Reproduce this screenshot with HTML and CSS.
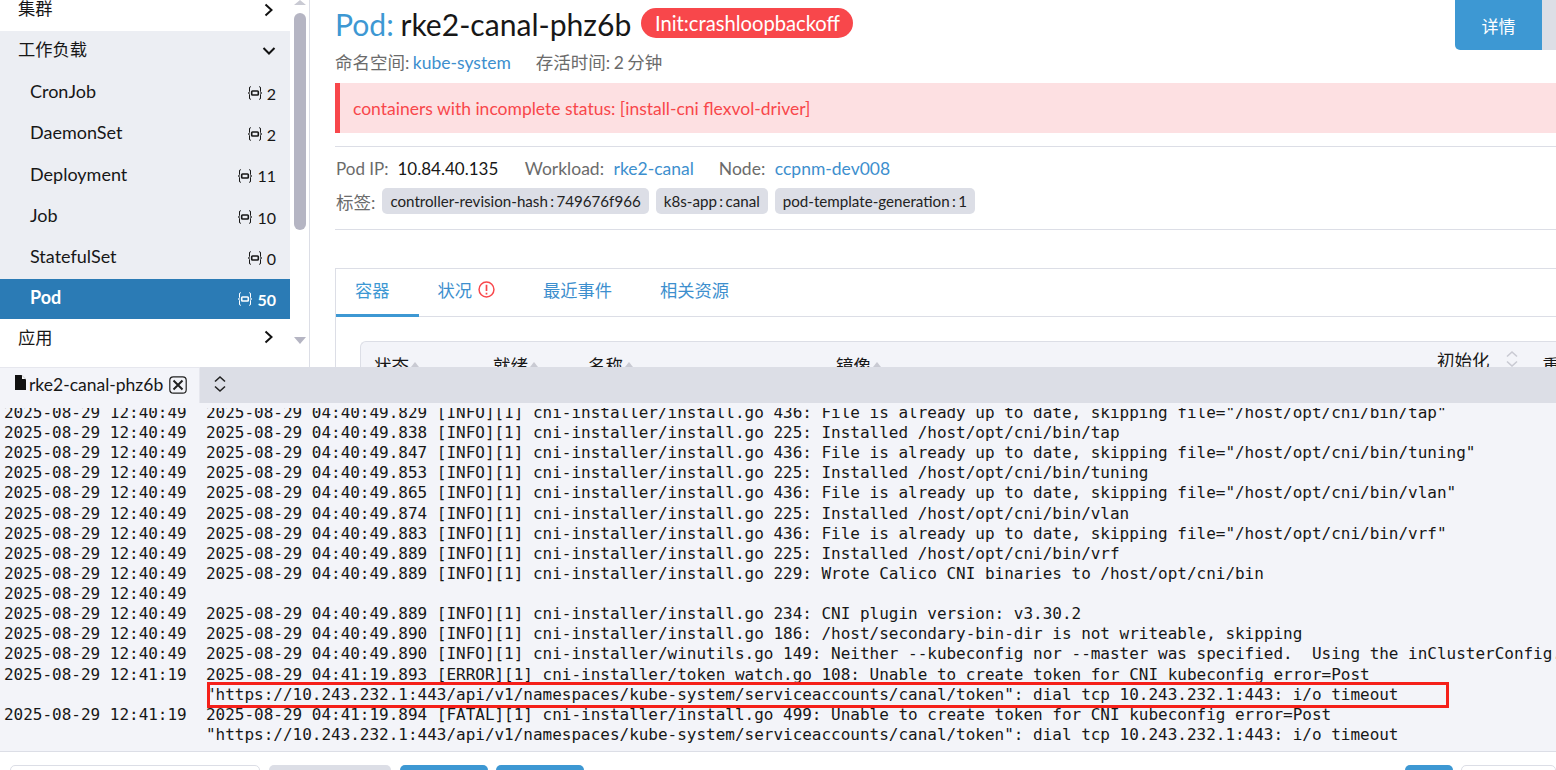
FILE: index.html
```html
<!DOCTYPE html>
<html lang="zh">
<head>
<meta charset="utf-8">
<title>rke2-canal-phz6b</title>
<link rel="stylesheet" href="styles.css">
</head>
<body>
<svg class="defs" width="0" height="0"><defs>
<symbol id="res" viewBox="0 0 14 14"><path d="M3 .7h-.4Q1.500 .7 1.500 2v3.500Q1.500 7 .3 7 1.500 7 1.500 8.500V12q0 1.300 1.100 1.300H3M11 .7h.4q1.100 0 1.100 1.300v3.500q0 1.500 1.200 1.500-1.200 0-1.200 1.500V12q0 1.300-1.100 1.300H11" fill="none" stroke="currentColor" stroke-width="1"/><rect x="3.700" y="5" width="6.600" height="4" rx=".8" fill="none" stroke="currentColor" stroke-width="1.600"/></symbol>
<symbol id="right" viewBox="0 0 12 14"><path d="M2.500 1.500 8.500 7l-6 5.500" fill="none" stroke="currentColor" stroke-width="2"/></symbol>
<symbol id="down" viewBox="0 0 14 10"><path d="M1.500 2 7 7.500 12.500 2" fill="none" stroke="currentColor" stroke-width="2"/></symbol>
<symbol id="updown" viewBox="0 0 14 18"><path d="M2 6.500 7 2l5 4.500M2 11.500 7 16l5-4.500" fill="none" stroke="currentColor" stroke-width="1.600"/></symbol>
</defs></svg>

<div class="top">
  <nav class="sidebar">
    <div class="menu">
      <div class="group-row cut"><span>集群</span><svg class="chev"><use href="#right"/></svg></div>
      <div class="group-open">
        <div class="group-row first"><span>工作负载</span><svg class="chev-down"><use href="#down"/></svg></div>
        <div class="item"><span>CronJob</span><span class="count"><svg class="res"><use href="#res"/></svg>2</span></div>
        <div class="item"><span>DaemonSet</span><span class="count"><svg class="res"><use href="#res"/></svg>2</span></div>
        <div class="item"><span>Deployment</span><span class="count"><svg class="res"><use href="#res"/></svg>11</span></div>
        <div class="item"><span>Job</span><span class="count"><svg class="res"><use href="#res"/></svg>10</span></div>
        <div class="item"><span>StatefulSet</span><span class="count"><svg class="res"><use href="#res"/></svg>0</span></div>
        <div class="item active"><span>Pod</span><span class="count"><svg class="res"><use href="#res"/></svg>50</span></div>
      </div>
      <div class="group-row last"><span>应用</span><svg class="chev"><use href="#right"/></svg></div>
    </div>
    <div class="scrollbar">
      <i class="arrow-up"></i>
      <i class="thumb"></i>
      <i class="arrow-down"></i>
    </div>
  </nav>
  <main class="main">
    <header class="head">
      <div class="head-text">
        <h1 class="title"><span class="blue">Pod:</span> rke2-canal-phz6b <span class="status">Init:crashloopbackoff</span></h1>
        <p class="meta">命名空间: <a class="link">kube-system</a><span class="meta-gap">存活时间: 2 分钟</span></p>
      </div>
      <div class="head-actions"><button class="btn-detail">详情</button><span class="btn-more"></span></div>
    </header>
    <div class="alert">containers with incomplete status: [install-cni flexvol-driver]</div>
    <section class="info">
      <div class="info-row"><span class="key ip">Pod IP:</span><span class="val ip">10.84.40.135</span><span class="key">Workload:</span><a class="link val">rke2-canal</a><span class="key">Node:</span><a class="link val">ccpnm-dev008</a></div>
      <div class="label-row"><span class="key">标签:</span><span class="tag">controller-revision-hash : 749676f966</span><span class="tag">k8s-app : canal</span><span class="tag">pod-template-generation : 1</span></div>
    </section>
    <section class="tabs">
      <div class="tab-bar">
        <a class="tab on">容器</a>
        <a class="tab">状况<svg class="warn" viewBox="0 0 16 16"><circle cx="8" cy="8" r="7" fill="none" stroke="currentColor" stroke-width="1.400"/><path d="M8 3.500v6M8 11v1.600" stroke="currentColor" stroke-width="1.600"/></svg></a>
        <a class="tab">最近事件</a>
        <a class="tab">相关资源</a>
      </div>
      <div class="tab-body">
        <div class="table-head">
          <span class="th th1">状态<i class="sort"></i></span>
          <span class="th th2">就绪<i class="sort"></i></span>
          <span class="th th3">名称<i class="sort"></i></span>
          <span class="th th4">镜像<i class="sort"></i></span>
          <span class="th th5">初始化<svg class="sort-big"><use href="#updown"/></svg></span>
          <span class="th th6">重</span>
        </div>
      </div>
    </section>
  </main>
</div>

<section class="dock">
  <div class="dock-tabs">
    <div class="dock-tab">
      <svg class="file" viewBox="0 0 12 15"><path d="M1 0h6.500L12 4.500V15H1z" fill="#111"/><path d="M8 .5V4h3.500" fill="#fff"/></svg>
      <span>rke2-canal-phz6b</span>
      <svg class="close" viewBox="0 0 18 18"><rect x=".8" y=".8" width="16.400" height="16.400" rx="3.500" fill="none" stroke="#222" stroke-width="1.200"/><path d="M4.500 4.500l9 9M13.500 4.500l-9 9" stroke="#222" stroke-width="2"/></svg>
    </div>
    <svg class="dock-toggle"><use href="#updown"/></svg>
  </div>
  <div class="log">
   <div class="log-in">
<div class="l"><b>2025-08-29 12:40:49</b><span>2025-08-29 04:40:49.829 [INFO][1] cni-installer/install.go 436: File is already up to date, skipping file="/host/opt/cni/bin/tap"</span></div>
<div class="l"><b>2025-08-29 12:40:49</b><span>2025-08-29 04:40:49.838 [INFO][1] cni-installer/install.go 225: Installed /host/opt/cni/bin/tap</span></div>
<div class="l"><b>2025-08-29 12:40:49</b><span>2025-08-29 04:40:49.847 [INFO][1] cni-installer/install.go 436: File is already up to date, skipping file="/host/opt/cni/bin/tuning"</span></div>
<div class="l"><b>2025-08-29 12:40:49</b><span>2025-08-29 04:40:49.853 [INFO][1] cni-installer/install.go 225: Installed /host/opt/cni/bin/tuning</span></div>
<div class="l"><b>2025-08-29 12:40:49</b><span>2025-08-29 04:40:49.865 [INFO][1] cni-installer/install.go 436: File is already up to date, skipping file="/host/opt/cni/bin/vlan"</span></div>
<div class="l"><b>2025-08-29 12:40:49</b><span>2025-08-29 04:40:49.874 [INFO][1] cni-installer/install.go 225: Installed /host/opt/cni/bin/vlan</span></div>
<div class="l"><b>2025-08-29 12:40:49</b><span>2025-08-29 04:40:49.883 [INFO][1] cni-installer/install.go 436: File is already up to date, skipping file="/host/opt/cni/bin/vrf"</span></div>
<div class="l"><b>2025-08-29 12:40:49</b><span>2025-08-29 04:40:49.889 [INFO][1] cni-installer/install.go 225: Installed /host/opt/cni/bin/vrf</span></div>
<div class="l"><b>2025-08-29 12:40:49</b><span>2025-08-29 04:40:49.889 [INFO][1] cni-installer/install.go 229: Wrote Calico CNI binaries to /host/opt/cni/bin</span></div>
<div class="l"><b>2025-08-29 12:40:49</b><span></span></div>
<div class="l"><b>2025-08-29 12:40:49</b><span>2025-08-29 04:40:49.889 [INFO][1] cni-installer/install.go 234: CNI plugin version: v3.30.2</span></div>
<div class="l"><b>2025-08-29 12:40:49</b><span>2025-08-29 04:40:49.890 [INFO][1] cni-installer/install.go 186: /host/secondary-bin-dir is not writeable, skipping</span></div>
<div class="l"><b>2025-08-29 12:40:49</b><span>2025-08-29 04:40:49.890 [INFO][1] cni-installer/winutils.go 149: Neither --kubeconfig nor --master was specified.  Using the inClusterConfig.  This might not work.</span></div>
<div class="l"><b>2025-08-29 12:41:19</b><span>2025-08-29 04:41:19.893 [ERROR][1] cni-installer/token_watch.go 108: Unable to create token for CNI kubeconfig error=Post
"https://10.243.232.1:443/api/v1/namespaces/kube-system/serviceaccounts/canal/token": dial tcp 10.243.232.1:443: i/o timeout</span></div>
<div class="l"><b>2025-08-29 12:41:19</b><span>2025-08-29 04:41:19.894 [FATAL][1] cni-installer/install.go 499: Unable to create token for CNI kubeconfig error=Post
"https://10.243.232.1:443/api/v1/namespaces/kube-system/serviceaccounts/canal/token": dial tcp 10.243.232.1:443: i/o timeout</span></div>
   </div>
   <div class="annot"></div>
  </div>
  <div class="dock-foot">
    <span class="f-input"></span>
    <span class="f-grey"></span>
    <span class="f-blue"></span>
    <span class="f-blue"></span>
    <span class="f-spacer"></span>
    <span class="f-blue small"></span>
    <span class="f-white"></span>
  </div>
</section>
</body>
</html>
```
FILE: styles.css
```css
* { box-sizing: border-box; }
html, body { margin: 0; padding: 0; width: 1556px; height: 770px; overflow: hidden; background: #fff; }
body { font-family: Lato, "Noto Sans CJK SC", sans-serif; color: #171717; display: flex; flex-direction: column; font-size: 17.500px; }
.defs { position: absolute; }
a { text-decoration: none; }

.top { height: 367px; display: flex; overflow: hidden; flex: none; }
.sidebar { width: 310px; flex: none; display: flex; border-right: 1px solid #dcdee6; height: 367px; }
.menu { width: 290px; flex: none; }
.group-row { height: 41px; display: flex; justify-content: space-between; align-items: center; padding: 0 15px 0 18px; font-size: 17.250px; }
.group-row.cut { height: 31px; align-items: flex-start; padding-top: 0; }
.group-row.cut span { line-height: 18px; }
.group-row.cut .chev { margin-top: 3px; }
.group-row.first { padding-bottom: 6px; }
.group-row.first .chev-down { margin-top: 5px; }
.group-row.last { padding-bottom: 6px; }
.group-open { background: #eceef3; }
.chev { width: 12px; height: 14px; color: #111; }
.chev-down { width: 14px; height: 10px; color: #111; margin-right: -1px; }
.item { height: 41.300px; display: flex; justify-content: space-between; align-items: center; padding: 0 14px 3px 30px; font-size: 18px; }
.item.active { background: #2b7bb5; color: #fff; font-weight: 700; height: 40.500px; margin-top: .5px; padding-bottom: 4px; }
.count { display: flex; align-items: center; font-size: 16px; font-weight: 400; padding-top: 4px; }
.active .count { font-weight: 700; padding-top: 4px; }
.res { width: 14px; height: 14px; margin-right: 5px; }

.scrollbar { width: 19px; margin-left: 4px; position: relative; display: flex; flex-direction: column; align-items: flex-start; }
.arrow-up { width: 0; height: 0; border: 6px solid transparent; border-top: 0; border-bottom: 5px solid #c9cad3; margin: 0 0 8px 0; }
.thumb { width: 12px; height: 217px; background: #b5b5c3; border-radius: 6px; }
.arrow-down { width: 0; height: 0; border: 6px solid transparent; border-bottom: 0; border-top: 7px solid #b5b5c3; margin-top: 107px; }

.main { flex: 1; min-width: 0; padding-left: 25px; }
.head { display: flex; justify-content: space-between; height: 83px; }
.title { margin: 0 0 0 1px; font-size: 30.100px; font-weight: 400; line-height: 32px; padding-top: 8px; display: flex; align-items: center; height: 40px; white-space: pre; }
.title .blue { margin: 0 -1px 0 -1px; }
.blue { color: #3d98d3; }
.status { font-size: 20.200px; color: #fff; background: #f8474b; border-radius: 15px; height: 30px; line-height: 30px; padding: 0 13px 0 14px; margin: -2px 0 0 2px; }
.meta { margin: 11px 0 0; font-size: 17.500px; line-height: 24px; color: #6b6b6b; word-spacing: -1px; padding-left: 0; }
.meta-gap { margin-left: 25px; }
.link { color: #3d8fce; }
.head-actions { display: flex; height: 50px; }
.btn-detail { width: 87px; height: 50px; border: 0; background: #3d98d3; color: #fff; font: 17px "Noto Sans CJK SC", sans-serif; border-radius: 0 0 0 5px; padding: 0; }
.btn-more { width: 14px; background: #dcdee6; }

.alert { height: 50px; line-height: 51px; background: #fde0e2; border-left: 5px solid #f8474b; color: #f8474b; padding-left: 13px; font-size: 17.500px; }
.info { margin-top: 13px; height: 84px; border-top: 1px solid #dcdee6; border-bottom: 1px solid #dcdee6; padding-top: 8px; }
.info-row { display: flex; align-items: center; height: 26px; font-size: 17.500px; padding-left: 1px; }
.key { color: #6b6b6b; margin-right: 9.500px; }
.key.ip { margin-right: 9px; }
.ip { font-size: 17px; }
.val { margin-right: 25px; }
.val.ip { margin-right: 26.500px; }
.label-row { display: flex; align-items: center; height: 26px; margin-top: 7px; }
.label-row .key { margin-right: 7px; padding-left: 1px; }
.tag { background: #dcdee6; border-radius: 5px; height: 26px; line-height: 26px; padding: 0 8px; font-size: 15.150px; word-spacing: -1.500px; margin-right: 7px; color: #222; }

.tabs { margin-top: 38px; border: 1px solid #dcdee6; border-right: 0; border-bottom: 0; height: 120px; }
.tab-bar { height: 48px; display: flex; border-bottom: 1px solid #dcdee6; }
.tab { color: #3d8fce; display: flex; align-items: center; padding: 0 29px 8px 19px; font-size: 17.250px; height: 48px; }
.tab.on { border-bottom: 3px solid #3d98d3; color: #3d98d3; padding-bottom: 5px; }
.warn { width: 17px; height: 17px; color: #f8474b; margin-left: 6px; }
.tab-body { padding: 24px 0 0 24px; }
.table-head { height: 60px; background: #f3f4f9; border: 1px solid #dcdee6; border-right: 0; border-radius: 6px 0 0 0; display: flex; padding-top: 9px; font-size: 17.500px; white-space: nowrap; }
.th { display: inline-flex; align-items: center; height: 26px; flex: none; }
.th1 { width: 119px; margin-left: 13px; }
.th2 { width: 95px; }
.th3 { width: 248px; }
.th4 { width: 601px; }
.th5 { margin-top: -5px; }
.th6 { margin-left: 24px; }
.sort { width: 0; height: 0; border: 4px solid transparent; border-bottom: 5px solid #c9cad3; border-top: 0; margin-left: 2px; }
.sort-big { width: 14px; height: 18px; color: #c9cad3; margin-left: 15px; }

.dock { flex: 1; display: flex; flex-direction: column; min-height: 0; background: #f3f4f9; }
.dock-tabs { height: 36px; background: #dcdee6; display: flex; align-items: center; flex: none; }
.dock-tab { width: 200px; height: 36px; background: #f3f4f9; display: flex; align-items: center; padding: 0 0 2px 14px; font-size: 17.500px; border-top: 1px solid #e6e7ee; border-right: 1px solid #e6e7ee; white-space: nowrap; }
.file { width: 12px; height: 15px; margin-right: 3px; margin-top: -4px; flex: none; }
.close { width: 18px; height: 18px; margin-left: 6px; flex: none; }
.dock-toggle { width: 14px; height: 18px; color: #222; margin-left: 13px; margin-top: -2px; }

.log { flex: 1; position: relative; overflow: hidden; margin-top: 5px; font-family: "DejaVu Sans Mono", monospace; font-size: 16px; line-height: 20.125px; letter-spacing: -0.016px; color: #171717; min-height: 0; }
.log-in { margin-top: -5.050px; }
.l { display: flex; white-space: pre; padding-left: 4px; }
.l b { font-weight: 400; width: 202px; flex: none; }
.annot { position: absolute; left: 207px; top: 274px; width: 1242px; height: 26px; border: 3px solid #f5201a; }

.dock-foot { height: 19px; background: #fff; border-top: 1px solid #dcdee6; display: flex; flex: none; padding: 13px 0 0 10px; gap: 9px; overflow: hidden; }
.dock-foot span { height: 30px; border-radius: 5px; flex: none; display: block; }
.f-input { width: 250px; border: 1px solid #dcdee6; }
.f-grey { width: 122px; background: #dcdee6; }
.f-blue { width: 88px; background: #3d98d3; margin-right: -1px; }
.f-blue.small { width: 48px; margin-right: -1px; }
.f-spacer { flex: 1 !important; }
.f-white { width: 95px; border: 1px solid #dcdee6; }
```
